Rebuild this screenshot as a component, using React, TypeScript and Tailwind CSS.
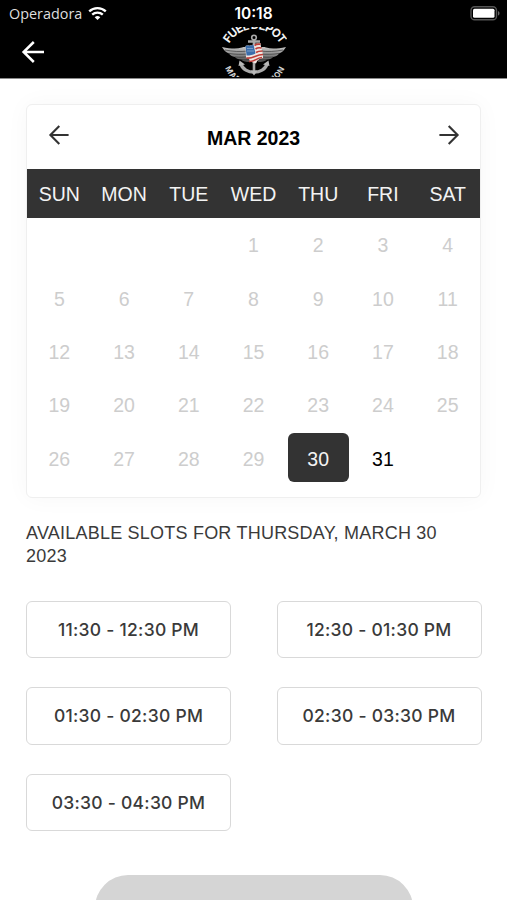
import { clsx } from "clsx";

const WEEKDAYS = ["SUN", "MON", "TUE", "WED", "THU", "FRI", "SAT"];

// March 2023 starts on a Wednesday
const DAYS_IN_MONTH = 31;
const SELECTED_DAY = 30;

const SLOTS = [
  "11:30 - 12:30 PM",
  "12:30 - 01:30 PM",
  "01:30 - 02:30 PM",
  "02:30 - 03:30 PM",
  "03:30 - 04:30 PM",
];

export default function App() {
  return (
    <div className="flex h-[900px] w-[507px] flex-col overflow-hidden bg-white font-['Liberation_Sans',Arial,sans-serif]">
      <Header />
      <main className="flex flex-col pt-[25px] pr-[25.5px] pl-[26px]">
        <Calendar />
        <h2 className="mt-[24px] text-[18px] leading-[23.5px] tracking-[0.22px] text-[#3a3a3a]">
          <span className="block whitespace-nowrap">AVAILABLE SLOTS FOR THURSDAY, MARCH 30</span>
          <span className="block">2023</span>
        </h2>
        <div className="mt-[32px] grid grid-cols-[205px_205px] justify-between gap-y-[29px]">
          {SLOTS.map((slot) => (
            <button
              key={slot}
              className="h-[57.6px] rounded-md border border-[#d9d9d9] bg-white pt-px font-['Inter',sans-serif] text-[17.5px] font-[450] tracking-[0.26px] whitespace-nowrap text-[#3a3a3a]"
            >
              {slot}
            </button>
          ))}
        </div>
      </main>
      <button aria-label="Continue" className="mt-[44px] h-[66px] w-[318px] shrink-0 self-center rounded-[33px] bg-[#d5d5d5]" />
    </div>
  );
}

function Header() {
  return (
    <header className="h-[79px] shrink-0 border-b border-[#8a8a8a] bg-black text-white">
      <div className="grid h-[27px] grid-cols-3 items-center px-[9px]">
        <div className="flex items-center gap-[6px]">
          <span className="pt-px font-['Open_Sans',sans-serif] text-[14.4px] leading-none text-[#dedede]">Operadora</span>
          <WifiIcon />
        </div>
        <span className="pt-px text-center font-['Inter',sans-serif] text-[15.5px] leading-none font-semibold">10:18</span>
        <BatteryIcon />
      </div>
      <div className="grid grid-cols-[1fr_66px_1fr] items-center">
        <button aria-label="Back" className="ml-[21px] w-6">
          <svg width="24" height="24" viewBox="0 0 24 24" fill="none" stroke="currentColor" strokeWidth="2.5">
            <path d="M12.8 2 2.6 12l10.2 10M2.6 12H23" />
          </svg>
        </button>
        <Logo />
      </div>
    </header>
  );
}

function WifiIcon() {
  return (
    <svg width="19" height="15" viewBox="0 0 19 15" fill="none" stroke="white" strokeWidth="2.3">
      <path d="M1.2 5.4a12 12 0 0 1 16.6 0M4.2 8.7a7.7 7.7 0 0 1 10.6 0" />
      <path d="M6.7 11.2a4.2 4.2 0 0 1 5.6 0L9.5 14z" fill="white" stroke="none" />
    </svg>
  );
}

function BatteryIcon() {
  return (
    <svg className="-mr-[3px] justify-self-end" width="31" height="15" viewBox="0 0 31 15">
      <rect x="1" y=".8" width="25.5" height="13" rx="3.6" fill="none" stroke="#555" strokeWidth="1.4" />
      <rect x="3" y="2.8" width="21.5" height="9" rx="1.5" fill="white" />
      <path d="M28 5v4.6c2-.8 2-3.8 0-4.6" fill="#666" />
    </svg>
  );
}

/** Winged anchor badge; the ring of lettering runs past the bar and is cut off. */
function Logo() {
  return (
    <svg width="66" height="50" viewBox="0 0 66 50" className="overflow-hidden">
      <defs>
        <path id="arc-top" d="M4 31.5a29.5 29.5 0 0 1 59 0" />
        <path id="arc-bottom" d="M2 29a32 32 0 0 0 64 0" />
        <linearGradient id="steel" x1="0" y1="0" x2="0" y2="1">
          <stop offset="0" stopColor="#c4c4c4" />
          <stop offset=".5" stopColor="#8a8a8a" />
          <stop offset="1" stopColor="#484848" />
        </linearGradient>
      </defs>
      <text className="font-['Inter',sans-serif] text-[11.5px] font-bold tracking-[-0.9px]" fill="#f2f2f2" textAnchor="middle">
        <textPath href="#arc-top" startOffset="50%">FUEL DEPOT</textPath>
      </text>
      <text className="font-['Inter',sans-serif] text-[8px] font-bold tracking-[0.5px]" fill="#d5d5d5" textAnchor="middle">
        <textPath href="#arc-bottom" startOffset="50%">MARINE STATION</textPath>
      </text>

      {/* wings */}
      <g fill="url(#steel)">
        <path d="M1 20c8 1.5 14 2.5 20 .5 3-1 5-.5 7 1.5l1 13c-4 0-7-.5-9-2.5-3 0-5-1-6-2.5-3-.5-5-1.5-6-3.5-3-1-5-3-7-6.5z" />
        <path d="M65 20c-8 1.5-14 2.5-20 .5-3-1-5-.5-7 1.5l-1 13c4 0 7-.5 9-2.5 3 0 5-1 6-2.5 3-.5 5-1.5 6-3.5 3-1 5-3 7-6.5z" />
      </g>
      <g fill="none" stroke="#2c2c2c" strokeWidth=".6">
        <path d="M4 23c8 1.5 15 2 23 1M8 26.5c7 1 12 1 19 .5M14 30c5 .4 9 .4 13-.5M20 32.5c3 .5 5 .4 8 0" />
        <path d="M62 23c-8 1.5-15 2-23 1M58 26.5c-7 1-12 1-19 .5M52 30c-5 .4-9 .4-13-.5M46 32.5c-3 .5-5 .4-8 0" />
      </g>

      {/* anchor */}
      <g fill="none" stroke="#a9a9a9">
        <circle cx="33" cy="10.5" r="2.3" strokeWidth="1.6" />
        <path d="M27 14.5h12M33 13v33" strokeWidth="2.6" />
        <path d="M20 37c3 11 23 11 26 0" strokeWidth="3.2" />
      </g>
      <path d="m17.5 39 1-5.5 5.5 4zM48.5 39l-1-5.5-5.5 4zM29.5 43.5h7l-3.5 5z" fill="#b8b8b8" />

      {/* flag */}
      <path d="M24.5 19c3-1 5 .5 8-1.5 3-2 5-1 7-1.5 0 5 3 9 2.5 15-3 .5-5 1-7 5.5l-6-2c-.5-3-3-4-4-4z" fill="#efe5e1" />
      <path d="M24.5 19c3-1 5 .5 8-1.5l2 9c-3 1.5-5 2-9 2z" fill="#3a6dab" />
      <path
        d="M33.5 18.5c2-1.5 4-1.5 6-1.2M34.5 22c2-1.5 4-1.5 6-1M35 25.5c2-1.5 4-1.5 6.5-1.5M25.5 31c7 1 9-3.5 16.5-3.5M28 34.5c6 .5 7-3.5 13-4"
        fill="none"
        stroke="#bd3d38"
        strokeWidth="1.6"
      />
      <path d="M26.5 21.5h6M26.5 24h6.5" stroke="#dbe7f5" strokeWidth=".8" strokeDasharray="1 1" />
    </svg>
  );
}

function Calendar() {
  const days = Array.from({ length: DAYS_IN_MONTH }, (_, i) => i + 1);

  return (
    <section className="mr-[0.5px] h-[393.5px] rounded-md border-[1.5px] border-[#efefef] bg-white shadow-[0_0_24px_rgba(0,0,0,0.035)]">
      <div className="flex h-[64px] items-center justify-between px-[20.5px]">
        <button aria-label="Previous month" className="-mt-[5px]">
          <ArrowIcon />
        </button>
        <span className="pt-[4px] text-[19.5px] font-bold text-black">MAR 2023</span>
        <button aria-label="Next month" className="-mt-[5px] rotate-180">
          <ArrowIcon />
        </button>
      </div>
      <div className="grid h-[49px] grid-cols-7 items-center bg-[#333] pt-[2px] text-center text-[19.5px] text-[#f3f3f3]">
        {WEEKDAYS.map((name) => (
          <span key={name}>{name}</span>
        ))}
      </div>
      <div className="grid auto-rows-[53.3px] grid-cols-7 text-[19.5px]">
        {days.map((day) => (
          <div key={day} className={clsx("p-[2px]", day === 1 && "col-start-4")}>
            <div
              className={clsx(
                "flex h-[49px] items-center justify-center rounded-md pt-[3px]",
                day < SELECTED_DAY && "text-[#cdcdcd]",
                day === SELECTED_DAY && "bg-[#333] text-[#f3f3f3]",
                day > SELECTED_DAY && "text-black"
              )}
            >
              {day}
            </div>
          </div>
        ))}
      </div>
    </section>
  );
}

function ArrowIcon() {
  return (
    <svg width="22" height="22" viewBox="0 0 22 22" fill="none" stroke="#333" strokeWidth="2.1">
      <path d="M11.3 2 2.4 11l8.9 9M2.4 11h18.2" />
    </svg>
  );
}
